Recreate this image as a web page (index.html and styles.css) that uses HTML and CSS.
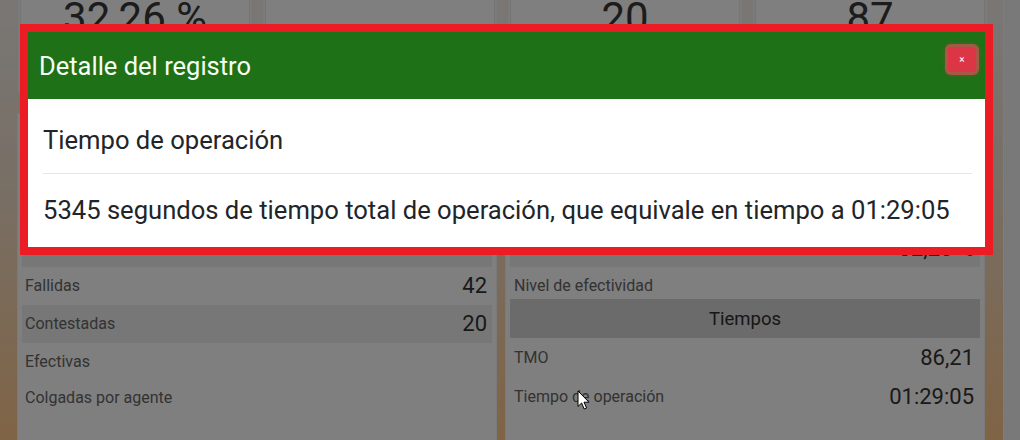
FILE: index.html
```html
<!DOCTYPE html>
<html lang="es">
<head>
<meta charset="utf-8">
<title>Detalle del registro</title>
<link rel="stylesheet" href="styles.css">
</head>
<body>
<div class="screen">
  <main class="dash">
    <div class="cards">
      <div class="card"><span class="card-value">32,26 %</span></div>
      <div class="card"><span class="card-value"></span></div>
      <div class="card"><span class="card-value">20</span></div>
      <div class="card"><span class="card-value">87</span></div>
    </div>
    <div class="panels">
      <section class="panel">
        <div class="panel-head"></div>
        <div class="row"></div>
        <div class="row"></div>
        <div class="row striped"></div>
        <div class="row"><span class="label">Fallidas</span><span class="value">42</span></div>
        <div class="row striped"><span class="label">Contestadas</span><span class="value">20</span></div>
        <div class="row"><span class="label">Efectivas</span><span class="value"></span></div>
        <div class="row short"><span class="label">Colgadas por agente</span></div>
      </section>
      <section class="panel panel-right">
        <div class="panel-head"></div>
        <div class="row"></div>
        <div class="row"></div>
        <div class="row striped"><span class="label"></span><span class="value peek">32,26 %</span></div>
        <div class="row low"><span class="label">Nivel de efectividad</span></div>
        <div class="panel-head">Tiempos</div>
        <div class="row tall"><span class="label">TMO</span><span class="value">86,21</span></div>
        <div class="row"><span class="label">Tiempo de operación</span><span class="value">01:29:05</span></div>
      </section>
    </div>
  </main>
  <div class="scrollbar"></div>
</div>

<div class="backdrop"></div>

<div class="modal" role="dialog" aria-labelledby="modal-title">
  <div class="modal-header">
    <h4 class="modal-title" id="modal-title">Detalle del registro</h4>
    <button class="close" type="button" aria-label="Cerrar">×</button>
  </div>
  <div class="modal-body">
    <h5 class="detail-title">Tiempo de operación</h5>
    <hr class="divider">
    <p class="detail-text">5345 segundos de tiempo total de operación, que equivale en tiempo a 01:29:05</p>
  </div>
</div>

<svg class="cursor" width="14" height="21" viewBox="0 0 14 21" aria-hidden="true">
  <path d="M1 1 L1 16.5 L4.6 13 L7.2 19 L9.6 18 L7 12.2 L12 12.2 Z" fill="#fff" stroke="#000" stroke-width="1" stroke-linejoin="round"/>
</svg>
</body>
</html>
```

FILE: styles.css
```css
* { box-sizing: border-box; }

html, body {
  margin: 0;
  padding: 0;
}

body {
  width: 1020px;
  height: 440px;
  overflow: hidden;
  position: relative;
  font-family: Roboto, "Liberation Sans", Arial, sans-serif;
}

.screen {
  display: flex;
  height: 440px;
  overflow: hidden;
}

.dash {
  flex: 1;
  padding: 0 18px 0 17px;
  background: linear-gradient(180deg, #f2eeea 0%, #f1ddc8 45%, #ffc88c 100%);
}

.scrollbar {
  width: 17px;
  background: #f2f2f2;
  border-left: 1px solid #fafafa;
}

/* top cards */
.cards {
  display: grid;
  grid-template-columns: repeat(4, 1fr);
  gap: 15px;
  margin: -40px 0 0 3px;
}

.card {
  height: 130px;
  background: #fff;
  border: 1px solid #eaeaea;
  box-shadow: 0 0 0 2px #f6f6f6;
  padding-top: 32px;
  display: flex;
  flex-direction: column;
  align-items: center;
}

.card-value {
  font-size: 42px;
  line-height: 50px;
  min-height: 50px;
  color: #383838;
}

/* panels */
.panels {
  display: grid;
  grid-template-columns: 1fr 1fr;
  gap: 8px;
  margin-top: 23px;
}

.panel {
  height: 400px;
  background: #fff;
  border: 1px solid #f4f4f4;
  padding: 0 4px;
}

.panel-head {
  height: 39px;
  background: #d6d6d6;
  display: flex;
  align-items: center;
  justify-content: center;
  font-size: 18.5px;
  color: #2e2e2e;
}

.row {
  height: 38px;
  display: flex;
  align-items: center;
  justify-content: space-between;
  padding: 0 5px 0 3px;
}

.panel-right .row {
  padding: 0 6px 0 4px;
}

.row.striped { background: #eeeeee; }
.row.short { height: 34px; }
.row.tall { height: 40px; }
.row.low {
  height: 32px;
  align-items: flex-end;
  padding-bottom: 2px;
}

.label {
  font-size: 16px;
  line-height: 22px;
  color: #666;
}

.value {
  font-size: 22px;
  line-height: 26px;
  min-height: 26px;
  color: #333;
}

.value.peek {
  position: relative;
  top: 1px;
}

/* modal */
.backdrop {
  position: fixed;
  inset: 0;
  background: rgba(0, 0, 0, 0.5);
}

.modal {
  position: fixed;
  left: 20px;
  top: 24px;
  width: 973px;
  border: 8px solid #ec1c24;
  background: #fff;
}

.modal-header {
  height: 67px;
  background: #1e7117;
  display: flex;
  align-items: center;
  justify-content: space-between;
  padding: 0 9px 0 11px;
}

.modal-title {
  margin: 0;
  font-size: 25.5px;
  line-height: 30px;
  font-weight: 400;
  color: #f7fff5;
}

.close {
  align-self: flex-start;
  margin-top: 15px;
  width: 28px;
  height: 25px;
  padding: 0;
  border: 0;
  border-radius: 3px;
  background: #dc3545;
  box-shadow: 0 0 0 3px rgba(225, 83, 97, 0.6), 0 0 3px 4px rgba(220, 53, 69, 0.25);
  color: #fff;
  font-family: Roboto, "Liberation Sans", sans-serif;
  font-size: 10px;
  line-height: 25px;
  text-align: center;
}

.modal-body {
  padding: 26px 13px 22px 15px;
}

.detail-title {
  margin: 0;
  font-size: 25.6px;
  line-height: 30px;
  font-weight: 400;
  color: #212529;
}

.divider {
  margin: 18px 0 21px;
  border: 0;
  border-top: 1px solid #e6e6e6;
  height: 0;
}

.detail-text {
  margin: 0;
  font-size: 25.6px;
  line-height: 30px;
  color: #212529;
  white-space: nowrap;
}

.cursor {
  position: fixed;
  left: 577px;
  top: 390px;
  pointer-events: none;
}
```
